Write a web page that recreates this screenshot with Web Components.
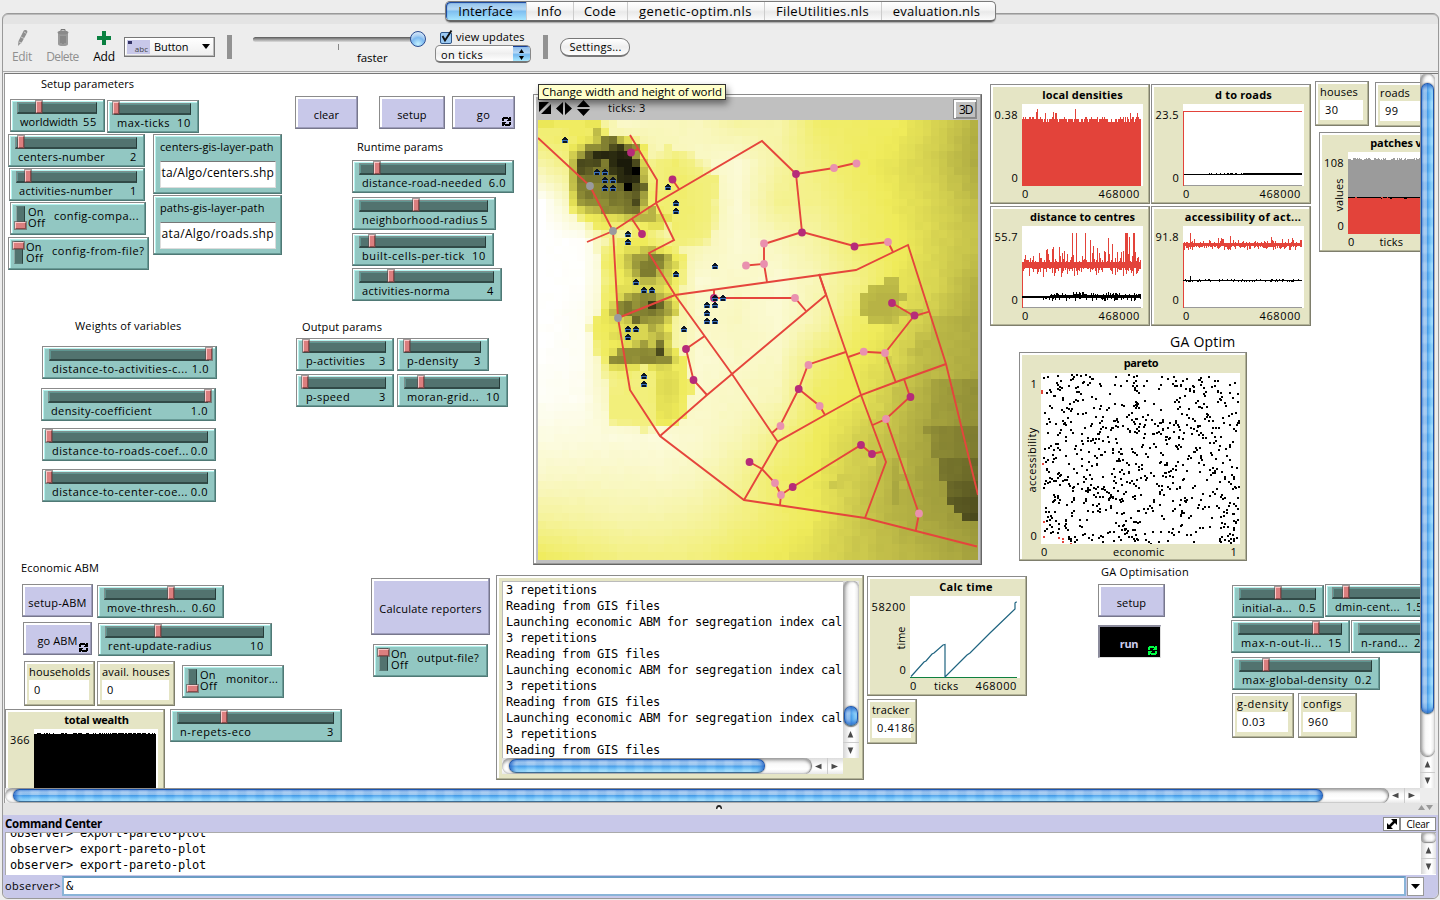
<!DOCTYPE html>
<html lang="en">
<head>
<meta charset="utf-8">
<title>Interface</title>
<style>
html,body{margin:0;padding:0;height:100%;overflow:hidden;background:#ededed}
body{font:11px/14px "Open Sans","Noto Sans",sans-serif;color:#000}
</style>
</head>
<body>
<nl-app></nl-app>
<script>
const define=(tag,css,render,after)=>customElements.define(tag,class extends HTMLElement{
  connectedCallback(){
    if(this.shadowRoot)return;
    const r=this.attachShadow({mode:'open'});
    r.innerHTML=`<style>*,:host{box-sizing:border-box}${css}</style>`+render(k=>this.getAttribute(k)||'',this);
    if(after)after(this,r);
  }
});
const rng=s=>()=>{s|=0;s=s+0x6D2B79F5|0;let t=Math.imul(s^s>>>15,1|s);t=t+Math.imul(t^t>>>7,61|t)^t;return((t^t>>>14)>>>0)/4294967296};
/* Workspace items are placed on the free canvas whose origin is (5,74) */
const at=(x,y,w,h,more='')=>`style="left:${x-5}px;top:${y-74}px;width:${w}px;height:${h}px;${more}"`;
const T=(s,w)=>`<fit-text w="${w}">${s}</fit-text>`;
const bevel=(bg,hi,mid,dark)=>`:host{position:absolute;background:${bg};border:1px solid #8b8b8b;border-right-color:${dark};border-bottom-color:${dark};box-shadow:inset -1px -1px 0 ${mid},inset 1px 1px 0 #fff,inset 2px 2px 0 ${hi}}`;
const TEAL=bevel('#92c7c2','#b5f3ee','#689a96','#4f7975'),TAN=bevel('#e5e5c5','#fff','#b3b397','#7e7e6c'),LILAC=bevel('#c8c8e9','#fff','#9c9cba','#77778c');
const THUMB='background:#db7f7f;border:1px solid #fbc9c9;border-right-color:#8e4b4b;border-bottom-color:#8e4b4b;box-shadow:0 0 0 1px rgba(90,70,70,.55)';
const FOREVER=c=>`<svg width="9" height="9" viewBox="0 0 9 9" shape-rendering="crispEdges"><path d="M1 0H6V1H7V0H9V4H5V3H6V2H2V4H0V1H1zM8 9H3V8H2V9H0V5H4V6H3V7H7V5H9V8H8z" fill="${c}"/></svg>`;

/* Text spaced to a given advance width */
const measure=document.createElement('canvas').getContext('2d');
define('fit-text',':host{display:inline-block;white-space:pre;flex:none}',()=>'<slot></slot>',el=>{
  const w=+el.getAttribute('w'),s=el.textContent.replace(/&amp;/g,'&'),c=getComputedStyle(el);
  measure.font=`${c.fontStyle} ${c.fontWeight} ${c.fontSize} ${c.fontFamily}`;
  if(w)el.style.letterSpacing=((w-measure.measureText(s).width)/s.length).toFixed(3)+'px';
});

define('nl-slider',TEAL+`:host{padding:2px 7px 0 6px}
.g{position:relative;height:12px;background:#52736f;border:1px solid #7f8f8d;border-right:1px solid #263b39;border-bottom:2px solid #314a47;box-shadow:inset 1px 1px 0 #5f9590}
.t{position:absolute;top:-2px;width:6px;height:12px;${THUMB}}
.r{display:flex;justify-content:space-between;margin:1px 0 0 3px;white-space:nowrap}
.v{flex:none}`,g=>`<div class="g"><div class="t" style="left:${+g('t')-7}px"></div></div><div class="r">${T(g('name'),g('nw'))}<span class="v">${T(g('value'),g('value').length*7-(g('value').includes('.')?3.8:0))}</span></div>`);

define('nl-switch',TEAL+`:host{display:flex}
.l{position:relative;width:9px;height:23px;margin:3px 0 0 5px;background:#52736f;border:1px solid #5b7c78;border-left-color:#8da6a3;border-right-color:#2c4340}
.t{position:absolute;left:-2px;width:11px;height:7px;${THUMB}}
.o{line-height:11px;margin:3px 0 0 3px;width:26px}
.n{margin-top:6px}.o fit-text{display:block}`,g=>`<div class="l"><div class="t" style="top:${g('on')?0:15}px"></div></div><div class="o">${T('On',15.5)}${T('Off',17.5)}</div><div class="n">${T(g('name'),g('nw'))}</div>`);

define('nl-button',LILAC+`:host{display:flex;align-items:center;justify-content:center;padding-top:4px}
:host([pressed]){background:#000;color:#cfcff0;font-weight:700;border:2px solid #8b8b9c;border-right:1px solid #ddd;border-bottom:1px solid #ddd;box-shadow:none;padding:3px 2px 0 0}
i{position:absolute;right:3px;bottom:2px;line-height:0}`,g=>T(g('name'),g('nw'))+(g('forever')?`<i>${FOREVER(g('pressed')?'#0f4':'#000')}</i>`:''));

define('nl-monitor',TAN+`:host{padding:3px 5px 0 4px}
.v{height:20px;background:#fff;margin:1px 0 0;padding:3px 0 0 5px;white-space:nowrap}`,g=>`${T(g('name'),g('nw'))}<div class="v">${T(g('value'),g('vw'))}</div>`);

define('nl-input',TEAL+`:host{padding:5px 5px 0 6px}
.f{margin-top:7px;height:27px;background:#fff;border:1px solid #ddd;border-top-color:#777;display:flex;justify-content:flex-end;padding:4px 1px;overflow:hidden;font-size:12px;line-height:14px}`,g=>`${T(g('name'),g('nw'))}<div class="f">${T(g('value'),112.500)}</div>`);

define('nl-note',':host{position:absolute;white-space:nowrap}',g=>T(g('text'),g('nw')));

/* ---- plots ---- */
const svg=(w,h,s)=>`<svg width="${w}" height="${h}" viewBox="0 0 ${w} ${h}" shape-rendering="crispEdges">${s}</svg>`;
const bars=(seed,n,lo,hi,bot,step=1)=>{const r=rng(seed);let d='';for(let x=0;x<n;x+=step){const a=Math.round(lo(r,x)),b=Math.round(hi(r,x));d+=`M${x+.5} ${a}V${bot===undefined?b:bot}`}return d};
const P=(d,c,w=1)=>`<path d="${d}" stroke="${c}" stroke-width="${w}" fill="none"/>`;
const SPIKE={50:7,54:7,63:7,68:14,71:20,86:12,90:18,103:7,104:7,105:7,107:11,111:7,112:7,37:21,24:24,45:28,31:21,75:22};
const RED='#e3433a';
const PLOT={
 density(){return svg(121,82,P(bars(3,119,r=>{const q=r();return q<.03?9:q<.3?13:q<.8?15:18},()=>0,82)+'M15 5V40M14.500 8V30M31.500 8V40M53.500 5V40',RED))},
 roads(){const r=rng(5);let d='';for(let x=24;x<119;x++)if(r()<.3)d+=`M${x+.5} 69V70`;return svg(121,82,P('M0 81.500H119','#999')+P('M.5 82V7.500H119',RED)+P('M1 70.500H119'+d,'#000')+P('M60 69.500H119','#000'))},
 centres(){return svg(121,82,P('M0 81.500H119','#999')+P('M.5 82V39',RED)+P(bars(8,119,(r,x)=>SPIKE[x]||36-Math.pow(r(),3)*13,r=>42+Math.pow(r(),3)*9),RED)+P(bars(9,119,(r,x)=>x<28?70:69.500-Math.pow(r(),3)*(x>100?5:4),(r,x)=>x<20?72:71.500+Math.pow(r(),4)*4),'#000'))},
 access(){return svg(121,82,P('M0 81.500H119','#999')+P('M.5 82V19',RED)+P(bars(12,119,(r,x)=>x==7?7:x==47?10:x==88?11:17-Math.pow(r(),4)*6,r=>20+Math.pow(r(),1.6)*4),RED)+P('M1 54.500H119'+bars(14,119,(r,x)=>x==7?50:54-(r()<.2?1:0),(r,x)=>55+(r()<.25?1:0)),'#000'))},
 patches(){return svg(76,82,P(bars(20,76,r=>r()<.3?6:r()<.5?7:8,()=>0,46),'#9b9b9b')+`<rect y="46" width="76" height="36" fill="${RED}"/>`+P('M0 45.500H76','#000')+P('M5 45.500h1M33 46.500h1M42 46.500h2M56 46.500h3','#000')+P('M7 45.500h2M33 45.500h2M39 45.500h1',RED))},
 wealth(){return svg(124,59,`<rect y="5" width="122" height="54"/>`+P(bars(31,122,r=>r()<.6?4:5,()=>5),'#000'))},
 calc(){return svg(110,82,P('M0 81.500H107','#0f8040')+`<path shape-rendering="auto" d="M1 80.500L14 66 16 65 22 58 24 57 33 49 35 48.500V81L55 61 57 59 60 57 80 37 105 13V7Q105.500 6 107 6" fill="none" stroke="#1f6480" stroke-width="1.200"/>`)},
 pareto(){const r=rng(77);let d='',e='';for(let i=0;i<700;i++){const x=2+Math.floor(r()*196),y=Math.floor(r()*169);if(x<24&&y>160)continue;d+=`M${x} ${y}h2v2h-2z`;if(r()<.16)d+=`M${Math.min(197,x+2)} ${y+(r()<.5?2:-2)}h2v2h-2z`}
  for(const[x,y]of[[0,17],[0,19],[1,90],[2,148],[2,163],[17,164],[21,165],[21,168],[29,170]])e+=`M${x} ${y}h2v2h-2z`;return svg(199,171,`<path d="${d}"/><path d="${e}" fill="${RED}"/>`)}
};
define('nl-plot',TAN+`:host{font-size:11px}
.p{position:absolute;background:#fff;line-height:0;overflow:hidden}
span{position:absolute;white-space:nowrap;line-height:14px}b{font-weight:700}
.r{transform:translate(-100%,-50%)}.c{transform:translate(-50%,-50%)}.l{transform:translate(0,-50%)}.v{transform:translate(-50%,-50%) rotate(-90deg)}`,(g,el)=>{
  const[px,py,pw,ph]=g('area').split(',').map(Number),[ymax,yw,xmax,xw]=g('range').split(',');
  const[tx,tw]=g('tpos').split(',');
  let s=`<span class="c" style="left:${tx}px;top:${g('ty')||10}px"><b>${T(g('name'),tw)}</b></span><div class="p" style="left:${px}px;top:${py}px;width:${pw}px;height:${ph}px">${PLOT[g('kind')]()}</div>`;
  s+=`<span class="r" style="left:${px-4}px;top:${py+10.500}px">${T(ymax,yw)}</span>`;
  if(!g('cut'))s+=`<span class="r" style="left:${px-4}px;top:${py+ph-8.500}px">${T('0',6.500)}</span><span class="l" style="left:${px}px;top:${py+ph+8}px">${T('0',6.500)}</span>`;
  if(xmax)s+=`<span class="r" style="left:${px+pw-3}px;top:${py+ph+8}px">${T(xmax,xw)}</span>`;
  if(g('xl')){const[a,w,x]=g('xl').split(',');s+=`<span class="l" style="left:${x}px;top:${py+ph+8}px">${T(a,w)}</span>`}
  if(g('yl')){const[a,w,x,y]=g('yl').split(',');s+=`<span class="v" style="left:${x}px;top:${y}px">${T(a,w)}</span>`}
  return s;
});

/* ---- scroll bars ---- */
define('nl-scroll',`:host{display:flex;background:linear-gradient(#dcdcdc,#fafafa 40%,#fff 70%,#e8e8e8);overflow:hidden}
:host([v]){flex-direction:column;background:linear-gradient(90deg,#d4d4d4,#fafafa 40%,#fff 70%,#e4e4e4)}
.k{flex:1;position:relative;border-radius:8px;display:flex;box-shadow:inset 0 2px 3px #999,inset 0 -1px 1px #ccc,1px 0 1px #777}
:host([v]) .k{flex-direction:column;box-shadow:inset 2px 0 3px #999,inset -1px 0 1px #ccc,0 1px 1px #888,0 -1px 1px #999}
.t{flex:none;border-radius:8px;margin:1px 0;border:1px solid #1b55ae;border-bottom-color:#3c6c93;background:repeating-linear-gradient(90deg,#ffffff18 0 6px,#2a7fd618 9px 15px,#ffffff18 18px),linear-gradient(#6fa2df,#a5caf0 18%,#94c4f1 42%,#499fe9 50%,#67b9f6 65%,#a9e8ff 95%);box-shadow:inset 5px 0 4px -3px #2a6ccc,inset -5px 0 4px -3px #2a6ccc,0 0 2px #555}
:host([v]) .t{margin:0 1px;background:repeating-linear-gradient(#ffffff18 0 6px,#2a7fd618 9px 15px,#ffffff18 18px),linear-gradient(90deg,#6fa2df,#a5caf0 18%,#94c4f1 42%,#499fe9 50%,#67b9f6 65%,#a9e8ff 95%);box-shadow:inset 0 5px 4px -3px #2a6ccc,inset 0 -5px 4px -3px #2a6ccc,0 0 2px #555}
.a{flex:none;width:16px;height:100%;display:flex;align-items:center;justify-content:center;border-left:1px solid #ccc;padding-right:2px}
:host([v]) .a{width:100%;height:16px;border:0;border-top:1px solid #ccc;padding:0 1px 1px 0}.a:nth-of-type(2){border-color:transparent!important}`,g=>{
  const v=g('v'),[s,l]=(g('thumb')||'0,0').split(',');
  const arrow=d=>`<div class="a"><svg width="7" height="7" viewBox="0 0 7 7"><path d="${d}" fill="#4a4a4a"/></svg></div>`;
  return `<div class="k">${+l?`<div class="t" style="${v?`height:${l}px;margin-top:${s}px`:`width:${l}px;margin-left:${s}px`}"></div>`:''}</div>`+(v?arrow('M3.500 0L6.300 6.500H.7z')+arrow('M3.500 7L.7.500H6.300z'):arrow('M0 3.500L6.500 .7V6.300z')+arrow('M7 3.500L.5 .7V6.300z'));
});

define('nl-output',TAN+`:host{padding:5px 4px 5px 5px;display:grid;grid-template:1fr 16px / 1fr 16px;font:12px/16px "DejaVu Sans Mono","Liberation Mono",monospace}
.x{background:#fff;border:1px solid #bbb;border-right:0;border-bottom:0;padding:0 0 0 3px;overflow:hidden;white-space:pre}.x fit-text{display:block}`,()=>{
  const a='3 repetitions',b='Reading from GIS files',c='Launching economic ABM for segregation index cal';
  return `<div class="x">${[a,b,c,a,b,c,a,b,c,a,b].map(s=>T(s,s.length*7)).join('')}</div><nl-scroll v="1" thumb="125,20"></nl-scroll><nl-scroll thumb="7,256"></nl-scroll>`;
});

/* ---- world view ---- */
const FIELD=[
[54,56,85,82,82,75,77,60,58,56,50,42],
[75,62,60,80,84,88,75,65,57,53,48,40],
[100,75,60,76,76,88,70,68,60,54,50,44],
[100,99,78,74,80,88,82,75,62,56,50,46],
[100,99,78,64,88,85,88,80,68,54,50,42],
[100,97,70,66,85,83,88,78,60,52,47,40],
[99,97,68,70,88,85,84,64,55,50,42,36],
[97,96,78,76,86,84,80,58,54,46,39,36],
[92,91,90,90,86,80,68,56,49,44,37,34],
[85,84,84,85,82,72,60,54,48,42,37,33],
[73,75,78,77,74,67,60,54,47,42,38,35],
[57,62,66,67,65,58,55,51,47,44,41,38]];
const ROWS=[ /* row, first column, lightness of each cell */
[0,0,54,54,57,57,57,57,54,54],[1,0,62,62,62,60,57,57,58,44,60,80],
[2,3,60,60,55,53,46,44,27,44,52,70],[2,8,30],[3,4,54,49,33,33,30,18,13,28,33,56],
[4,4,48,36,20,10,9,10,8,9,37,60],[5,4,44,17,18,17,29,10,6,6,17,50],
[6,4,44,19,22,28,28,13,10,6,0,45],[7,4,44,28,27,27,28,27,10,9,10,42,60],
[8,4,45,30,30,31,30,30,25,0,18,24,58],[9,4,50,32,28,31,30,27,28,25,22,37,56],
[10,4,52,36,33,33,33,28,29,27,17,40,57],[11,4,60,50,44,42,32,33,32,28,27,47,42,55],
[12,5,66,55,54,52,52,50,46,43,42,42,49,53],[13,6,78,58,56,62,62,66,62,57,53,53,66],
[14,6,86,80,70,70,74,72,60,57,60,66],[15,7,84,78,66,58,57,55,55,56,60,64],
[16,7,84,66,60,57,52,52,46,44,53,57,62],[17,8,62,57,53,45,37,37,30,30,41,55,60],
[18,8,60,56,53,46,36,30,29,32,44,50,62],[19,8,64,58,55,50,40,29,29,42,47,56,66],
[20,8,66,60,56,53,48,43,43,48,49,58,66],[21,8,62,56,52,52,50,50,50,50,54,60],
[22,8,60,57,50,40,35,32,33,42,48,56],[23,8,60,50,32,28,34,31,14,24,40,52],
[24,8,54,44,32,28,31,30,28,32,38,48],[25,7,58,54,52,50,46,25,34,36,37,48],
[26,6,80,57,55,54,53,51,50,50,40,46,54],[27,7,58,56,52,51,50,50,50,46,42,48],
[28,7,64,58,55,54,52,46,37,46,28,50],[29,7,66,57,52,36,33,33,32,33,17,46,54],
[30,8,60,33,32,33,34,31,31,33,33,50,56],[31,8,62,52,51,53,53,60,53,50,51,56,56],
[32,8,66,58,55,54,57,57,56,53,52,53,56],[33,9,60,58,57,58,58,57,52,51,52,56,60],
[34,9,58,58,56,57,57,56,52,51,52,56,60],[35,9,57,57,57,57,57,56,53,52,53,57],
[36,9,57,57,57,57,58,57,53,53,54,58],[37,9,57,57,57,57,57,57,54,53,54,58],
[38,9,64,60,60,58,58,58,56,55,62],[39,13,66,76],
[3,16,66,78],[4,15,70,66,62,64,70],[5,14,64,60,59,56,60,62,70,76],[6,14,62,60,58,57,58,60,62,70],
[7,15,60,58,56,56,58,60,60,60],[8,15,60,57,56,56,58,59,60,62],[9,15,58,57,57,56,58,59,60,62],
[10,15,58,57,56,57,58,59,60,68],[11,16,57,56,57,57,59,60,66],[12,17,57,57,58,59,60,68],
[13,17,56,57,58,60,61,70],[14,17,58,59,59,60,62],[15,17,60,60,62,64,70],
[20,44,44,44],[21,42,44,43,43,43],[22,41,44,43,42,42,42,44],[23,41,44,42,42,42,43],
[24,41,43,42,42,42,43,44,46,45],[25,42,44,44,43,45],
[28,48,44,43],[27,48,45,45],[29,47,45,43,44],[34,45,45,45],[39,49,34],
[42,45,44],[45,45,40],[46,45,39,43],[47,45,39],[48,45,39],[43,45,41,44],[44,45,40,44],
[45,38,48,48],[46,37,47,48],[43,40,48,48,49],[36,42,50,50],[30,44,48]];
const RECTS=[[25,50,8,6,42],[33,50,6,6,36],[39,50,4,6,31],[43,51,3,5,27],[46,52,2,4,24],[48,52,1,4,21],[49,53,1,3,21],[50,54,1,2,19]];
const paint=cv=>{
  const c=cv.getContext('2d'),N=56,r=rng(42),L=[];
  for(let j=0;j<N;j++){L[j]=[];for(let i=0;i<N;i++){
    const u=i/5,v=j/5,a=Math.min(10,u|0),b=Math.min(10,v|0),p=u-a,q=v-b;
    L[j][i]=(FIELD[b][a]*(1-p)+FIELD[b][a+1]*p)*(1-q)+(FIELD[b+1][a]*(1-p)+FIELD[b+1][a+1]*p)*q+(r()-.5)*1.4;
  }}
  for(const[j,i,h,w,l]of RECTS)for(let y=j;y<j+h;y++)for(let x=i;x<i+w;x++)L[y][x]=l+(r()-.5)*1.5-(x-52)*.7;
  for(const[j,i,...a]of ROWS)a.forEach((l,k)=>{
    const x=i+k;
    if(j>=31&&j<=40&&x<15&&l>=54)l+=7;
    if(j>=3&&j<=15&&x>=14&&x<26&&l>=55)l+=4;
    L[j][x]=l;
  });
  for(let j=0;j<N;j++)for(let i=0;i<N;i++){
    const l=Math.max(0,Math.min(100,L[j][i])),m=l<55?[239*l/55,235*l/55,90*l/55]:[239+16*(l-55)/45,235+20*(l-55)/45,90+165*(l-55)/45];
    c.fillStyle=`rgb(${m.map(Math.round)})`;
    const x=Math.round(i*440/N),y=Math.round(j*440/N);c.fillRect(x,y,8,8);
  }
};
const ROADS=['538,138 590,186 613,231 618,318 630,390 660,436 744,500 865,518 977,546.500','587,242 613,231 656,203 762,141 796,174 802,232 854,246 888,242 893,252','630,135 657,180 656,203 674,240 649,253 675,295 732,374 777.700,441.700 744,500','796,174 834,168 856,163','802,232 764,244 764,264 746,265.500','764,264 767,282','618,318 675,295 856,270 908,245 946,364 978,495','819,274 826,295','819,274 861,395 886,462 865,518','826,295 732,374 707,395 660,436','714,289 714,298 795,298 806,311','777.700,441.700 825,415 861,395 896,382 946,364','704.700,336 686,349 693.500,380 707,395','848.300,357 863.700,351.700 885,353 895.700,382','885,353 914,316 929.300,311.700','892,303 914,316','845.700,352 808,364.700 798.700,389 780,426 772,433','798.700,389 819.700,406 825,415','904,379 910,396.700 886,419 872.700,425','886,419 919,513.700 915.700,530.700','749.500,462 762,469 775,483 781,494.700 780,505','781,494.700 792.700,487 861,445 872,454 882,451.700','631,152.500 638,149','672,179 679,189','632,219 642,234'];
const DOTS={'#9a9a9e':'590,186 613,231 618,318','#b62b79':'631,152.500 672.500,179.500 642,234 714,298 686,349 693.500,380 749.500,462 796,174 802,232.500 854.500,246.500 892,303 914.500,315.500 798.700,389 910.500,397 861,445 872,454 792.700,487','#e991af':'834,168 856.500,163.500 888,242 764,243.500 764,264 746,265.500 795,298 863.700,351.700 885,353 808.500,365 819.700,406 780.500,426 886,419 775,483 781,495 919,513.500'};
const HOUSES='565,140 597,172 605,172 605,180 613,180 605,187.500 613,187.500 668,187 675.500,203 675.500,211 628,234 628,242 715,266 675.500,274 636,282 644,290 652,290 715,298 722.700,298 707,305 715,305 707,313 707,321 715,321 683.500,329 628,329 636,329 628,337 644,376 644,384';
define('nl-view',bevel('#c0c0c0','#fff','#999','#666')+`:host{padding:3px 4px 4px 4px;display:flex;flex-direction:column}
header{flex:none;height:22px;display:flex;align-items:center;padding:0 0 2px 1px}
header svg{flex:none;margin-right:5px}.tk{margin-left:13px}
.d{margin-left:auto;width:24px;height:20px;margin-top:2px;padding:2px 5px;background:#c0c0c0;border:1px solid #8b8b8b;box-shadow:inset 2px 2px 0 #fff,inset -1px -1px 0 #888;font-size:12px;line-height:16px}
.w{position:relative;width:440px;height:440px;overflow:hidden}canvas{display:block}.w svg{position:absolute;inset:0}`,()=>{
  const pairs=s=>s.split(' ').map(p=>p.split(','));
  return `<header><svg width="12" height="12" viewBox="0 0 12 12"><path d="M0 0H10L0 10zM12 2V12H2z"/></svg><svg width="16" height="13" viewBox="0 0 16 13"><path d="M7 0V13L0 6.500zM9 0V13L16 6.500z"/></svg><svg width="13" height="16" viewBox="0 0 13 16"><path d="M0 7H13L6.500 0zM0 9H13L6.500 16z"/></svg><span class="tk">${T('ticks: 3',37.500)}</span><span class="d">${T('3D',13.500)}</span></header>
  <div class="w"><canvas width="440" height="440"></canvas><svg width="440" height="440" viewBox="538 120 440 440"><g fill="none" stroke="#e5453c" stroke-width="1.900">${ROADS.map(p=>`<polyline points="${p}"/>`).join('')}</g>${Object.entries(DOTS).map(([c,s])=>pairs(s).map(([x,y])=>`<circle cx="${x}" cy="${y}" r="3.900" fill="${c}"/>`).join('')).join('')}${pairs(HOUSES).map(([x,y])=>`<g shape-rendering="crispEdges" transform="translate(${Math.round(x-3)} ${Math.round(y-3)})"><path d="M1 1H5V2H6V6H0V3H1z" fill="#3a70bb"/><path d="M2 0H4V1H5V2H6V3H0V2H1V1H2zM1 4H5V6H1z" fill="#0b1422"/></g>`).join('')}</svg></div>`;
},(el,r)=>paint(r.querySelector('canvas')));
define('nl-tooltip',`:host{position:absolute;background:#ffffcb;border:1px solid #333;padding:0 0 0 3px;box-shadow:2px 4px 7px #0007;white-space:nowrap;font-size:11.500px;line-height:14px}`,()=>T('Change width and height of world',180));

/* ---- chrome ---- */
define('nl-tabs',`:host{display:flex;width:551px;height:21px;border:1px solid #7b7b7b;border-bottom:2px solid #666;border-radius:5px;overflow:hidden;background:linear-gradient(#fff,#f3f3f3 45%,#e9e9e9 55%,#fbfbfb);font-size:13px;line-height:18px;box-shadow:0 1px 1px #aaa}
div{flex:none;display:flex;justify-content:center;border-left:1px solid #ccc}
div:first-of-type{border:0;border-radius:4px 0 0 4px;background:linear-gradient(#8fc0ea,#b6d9f5 40%,#7fbff0 52%,#a5e5ff);box-shadow:inset 1px 1px 1px #15409a}`,()=>[['Interface',54.500,80],['Info',25,47],['Code',32,54],['genetic-optim.nls',113,137],['FileUtilities.nls',93,117],['evaluation.nls',87.500,111]].map(([s,w,b])=>`<div style="width:${b}px">${T(s,w)}</div>`).join(''));

define('nl-toolbar',`:host{display:flex;height:48px;padding-left:8px;align-items:flex-start;background:#ededed}
.b{flex:none;display:flex;flex-direction:column;align-items:center;width:42px;color:#8f8f8f;font-size:12px}
.b svg{height:20px;margin:4px 0 2px}.b.k{color:#000}
.cb{display:flex;align-items:center;width:91px;height:20px;margin:13px 0 0 2px;border:1px solid #777;background:linear-gradient(#fff,#eee);box-shadow:inset -1px -1px #bbb,inset 1px 1px #fff;padding:0 4px 1px 2px}
.cb em{width:23px;height:14px;background:#c8c8e9;font:8px/17px "Open Sans",sans-serif;text-align:right;padding-right:2px;margin-right:4px;position:relative;color:#444}
.cb em::before{content:"";position:absolute;left:1px;top:1px;width:4px;height:3px;background:#336}
.cb svg{margin-left:auto}
.s{width:5px;height:24px;background:#929292;margin:11px 0 0 12px}
.sl{position:relative;width:174px;height:48px;margin-left:21px}
.sl .tr{position:absolute;left:0;top:13px;width:166px;height:5px;border-radius:3px;background:linear-gradient(#777,#b5b5b5 60%,#ddd);border-top:1px solid #666}
.sl .kn{position:absolute;left:157px;top:7px;width:16px;height:16px;border-radius:50%;background:radial-gradient(circle at 50% 85%,#c4f2ff,#7db9f0 45%,#a9cff3 60%,#dcebfa 90%);border:1px solid #2a4c91}
.sl .tk{position:absolute;left:85px;top:20px;width:1px;height:6px;background:#888}
.sl span{position:absolute;left:104px;top:27px;font-size:11.500px}
.u{width:96px;margin:5px 0 0 8px}
.u>div:first-of-type{display:flex;align-items:center;gap:3px;padding-left:5px;height:15px}
.pop{display:flex;height:18px;border:1px solid #888;border-bottom:2px solid #777;border-radius:5px;background:linear-gradient(#fff,#eee 50%,#fff);padding-left:5px;overflow:hidden;line-height:17px;margin-top:1px}
.pop i{margin-left:auto;width:17px;background:linear-gradient(#8dbcec,#b3d7f6 40%,#74b9f0 55%,#a9e9ff);display:flex;align-items:center;justify-content:center;border-top:1px solid #15409a}
.set{margin:14px 0 0 12px;width:70px;height:19px;border:1px solid #777;border-bottom:2px solid #777;border-radius:9px;background:linear-gradient(#fff,#eee 50%,#fff);text-align:center;line-height:16px;padding-left:1px}`,()=>`
<div class="b" style="width:22px"><svg width="14" viewBox="0 0 14 20"><path d="M3 18L3.500 13 8.500 3Q9 1.500 11 2T12 5L7 14z" fill="#8f8f8f"/><path d="M4 14L6.500 15M9 4L11.500 5.500M6 9L9 10.500" stroke="#ccc"/></svg>${T('Edit',20)}</div>
<div class="b" style="width:33px;margin-left:13px"><svg width="14" viewBox="0 0 14 20"><path d="M2 4.500H12V16Q12 18 7 18T2 16z" fill="#9a9a9a"/><ellipse cx="7" cy="4.500" rx="5.500" ry="2" fill="#8a8a8a"/><path d="M5 3V1.500H9V3M5 8V15M7 8V16M9 8V15" fill="none" stroke="#777"/></svg>${T('Delete',32.500)}</div>
<div class="b k" style="width:22px;margin-left:14px"><svg width="14" viewBox="0 0 14 20"><path d="M5 3H9V8H14V12H9V17H5V12H0V8H5z" fill="#0a8040"/></svg>${T('Add',21.500)}</div>
<div class="cb" style="margin-left:9px"><em>abc</em>${T('Button',34.500)}<svg width="8" height="5" viewBox="0 0 8 5"><path d="M0 0H8L4 5z"/></svg></div><div class="s"></div>
<div class="sl"><div class="tr"></div><div class="tk"></div><div class="kn"></div><span>${T('faster',30.500)}</span></div>
<div class="u"><div><svg width="13" height="14" viewBox="0 0 13 14"><rect x=".5" y="2.500" width="11" height="11" rx="1.500" fill="#9bc9f2" stroke="#2f5587"/><path d="M2.500 6L5 10.500L11.500 .5" fill="none" stroke="#111" stroke-width="1.900"/></svg>${T('view updates',68.500)}</div><div class="pop">${T('on ticks',42)}<i><svg width="5" height="11" viewBox="0 0 5 11"><path d="M0 4H5L2.500 0zM0 7H5L2.500 11z"/></svg></i></div></div>
<div class="s" style="margin-left:12px"></div><div class="set">${T('Settings...',52)}</div>`);

define('nl-canvas',`:host{display:block;position:relative;overflow:hidden;background:#fff}`,()=>{
 const sl=(x,y,w,n,nw,v,t)=>`<nl-slider ${at(x,y,w,33)} name="${n}" nw="${nw}" value="${v}" t="${t-x}"></nl-slider>`;
 const sw=(x,y,w,n,nw,on)=>`<nl-switch ${at(x,y,w,33)} name="${n}" nw="${nw}" on="${on}"></nl-switch>`;
 const bt=(x,y,w,h,n,nw,f='')=>`<nl-button ${at(x,y,w,h)} name="${n}" nw="${nw}" ${f}></nl-button>`;
 const mo=(x,y,w,n,nw,v,vw)=>`<nl-monitor ${at(x,y,w,45)} name="${n}" nw="${nw}" value="${v}" vw="${vw}"></nl-monitor>`;
 const no=(x,y,t,nw,fs=11)=>`<nl-note style="left:${x-5}px;top:${y-81}px;font-size:${fs}px" text="${t}" nw="${nw}"></nl-note>`;
 const pl=(x,y,w,h,k,n,tp,area,range,more='')=>`<nl-plot ${at(x,y,w,h)} kind="${k}" name="${n}" tpos="${tp}" area="${area}" range="${range}" ${more}></nl-plot>`;
 return [
 no(41,84,'Setup parameters',93),no(357,147,'Runtime params',86),no(75,326,'Weights of variables',106.500),no(302,327,'Output params',80),no(21,568,'Economic ABM',78),no(1170,342,'GA Optim',65.500,14),no(1101,572,'GA Optimisation',88),
 sl(10,99,95,'worldwidth',58,'55',35),sl(107,100,92,'max-ticks',53,'10',111.500),sl(8,134,137,'centers-number',87,'2',17),sl(9,168,136,'activities-number',94,'1',24),
 sw(10,202,136,'config-compa...',85,''),sw(8,237,141,'config-from-file?',92.500,1),
 `<nl-input ${at(153,134,129,60)} name="centers-gis-layer-path" nw="113.500" value="ta/Algo/centers.shp"></nl-input><nl-input ${at(153,195,129,60)} name="paths-gis-layer-path" nw="104.500" value="ata/Algo/roads.shp"></nl-input>`,
 bt(295,96,63,33,'clear',25.500),bt(379,96,66,33,'setup',29.500),bt(452,96,63,33,'go',13.500,'forever="1"'),
 sl(352,160,162,'distance-road-needed',120,'6.0',373),sl(352,197,144,'neighborhood-radius',116.500,'5',412),sl(352,233,142,'built-cells-per-tick',103,'10',368),sl(352,268,150,'activities-norma',88,'4',387),
 sl(42,346,175,'distance-to-activities-c...',136,'1.0',205),sl(41,388,175,'density-coefficient',101,'1.0',204),sl(42,428,174,'distance-to-roads-coef...',137,'0.0',45),sl(42,469,174,'distance-to-center-coe...',136,'0.0',45),
 sl(296,338,98,'p-activities',59,'3',302),sl(397,338,92,'p-density',51.500,'3',403),sl(296,374,98,'p-speed',44,'3',301),sl(397,374,111,'moran-grid...',72,'10',417),
 bt(22,584,71,33,'setup-ABM',58.500),bt(23,622,69,33,'go ABM',40,'forever="1"'),sl(97,585,127,'move-thresh...',79,'0.60',167),sl(98,623,174,'rent-update-radius',104,'10',154),
 mo(24,661,71,'households',61.500,'0',6.500),mo(97,661,78,'avail. houses',68,'0',6.500),sw(182,665,102,'monitor...',52,''),sl(170,709,172,'n-repets-eco',71.500,'3',220),
 bt(371,578,119,57,'Calculate reporters',102.500),sw(373,644,115,'output-file?',62,1),
 pl(5,709,160,120,'wealth','total wealth','90.500,64.500','28,19,124,59','366,20','cut="1"'),
 `<nl-output ${at(496,575,368,205)}></nl-output><nl-view ${at(533,94,449,471)}></nl-view><nl-tooltip ${at(538,84,188,16)}></nl-tooltip>`,
 pl(990,84,160,120,'density','local densities','91.500,80.500','31,19,121,82','0.38,23.500,468000,41.500'),
 pl(1151,84,160,120,'roads','d to roads','91.500,57','31,19,121,82','23.5,23.500,468000,41.500'),
 pl(990,206,160,120,'centres','distance to centres','91.500,105','31,19,121,82','55.7,23.500,468000,41.500'),
 pl(1151,206,160,120,'access','accessibility of act...','91,116.500','31,19,121,82','91.8,23.500,468000,41.500'),
 mo(1315,81,54,'houses',38,'30',13.500),mo(1375,82,54,'roads',30,'99',13.500),
 pl(1319,132,160,120,'patches','patches v','76,51.500','28,19,124,82','108,20','xl="ticks,23.500,59.500" yl="values,33,18.500,61.500"'),
 pl(1019,352,228,209,'pareto','pareto','121,34.500','21,20,199,171','1,6.500,1,6.500','xl="economic,51.500,93" yl="accessibility,65,12,106.500"'),
 pl(867,576,160,120,'calc','Calc time','98,53.500','42,19,110,82','58200,34.500,468000,41.500','xl="ticks,24.500,66" yl="time,23,33,61"'),
 mo(867,699,50,'tracker',37.500,'0.4186',38),
 bt(1098,584,67,33,'setup',29.500),bt(1098,625,63,33,'run',18.500,'pressed="1" forever="1"'),
 sl(1232,585,92,'initial-a...',50,'0.5',1274),sl(1325,584,106,'dmin-cent...',65,'1.5',1342),sl(1231,620,119,'max-n-out-li...',81,'15',1312),sl(1351,620,78,'n-rand...',47,'2',1460),sl(1232,657,148,'max-global-density',106,'0.2',1262),
 mo(1232,693,62,'g-density',51.500,'0.03',23.500),mo(1298,693,59,'configs',39,'960',20.500)].join('')
});

define('nl-workspace',`:host{flex:none;display:grid;grid-template:714px 15px / 1415px 15px;height:730px;margin-left:1px;border-top:1px solid #777;border-left:1px solid #999}`,()=>`<nl-canvas></nl-canvas><nl-scroll v="1" thumb="9,631"></nl-scroll><nl-scroll thumb="8,1310"></nl-scroll>`);

define('nl-command',`:host{flex:1;display:flex;flex-direction:column;background:#c8c8e9;padding:0 2px 2px 0;margin:0;border-radius:0 0 6px 6px;overflow:hidden}
header{display:flex;height:17px;align-items:center;font-size:11.500px;font-weight:700;padding:1px 0 0 2px;flex:none}
header span{margin-left:auto;display:flex;font-weight:400}
.e,.c{background:#fff;border:1px solid #8b8b8b;height:14px;display:flex;align-items:center;justify-content:center;font-size:10px}.e{width:17px}.c{width:36px}
.o{flex:none;height:43px;display:flex;margin:0 0 0 2px;width:1431px;border-top:1px solid #aaa;border-left:1px solid #aaa;background:#fff;overflow:hidden;font:12px/16px "DejaVu Sans Mono","Liberation Mono",monospace}
.o>div{flex:1;display:flex;flex-direction:column;justify-content:flex-end;padding:0 0 2px 4px;height:42px}
.o nl-scroll{width:15px;height:41px}
.i{display:flex;flex:none;height:22px;align-items:center;padding-left:2px}
.f{flex:none;width:1344px;height:20px;margin-left:1px;background:#fff;border:2px solid #8ab4d8;border-top-color:#6c9cc4;padding-left:2px;font:12px/16px "DejaVu Sans Mono",monospace}
.d{width:17px;height:19px;margin-left:1px;background:#fff;border:1px solid #999;display:flex;align-items:center;justify-content:center}`,()=>`<header>${T('Command Center',97)}<span><div class="e"><svg width="10" height="10" viewBox="0 0 10 10"><path d="M4 0H10V6zM0 4V10H6z"/><path d="M8 2L2 8" stroke="#000" stroke-width="2.500"/></svg></div><div class="c">${T('Clear',23)}</div></span></header>
<div class="o"><div>${[1,2,3].map(()=>T('observer> export-pareto-plot',196)).join('')}</div><nl-scroll v="1"></nl-scroll></div>
<div class="i">${T('observer>',56)}<div class="f">&amp;</div><div class="d"><svg width="9" height="5" viewBox="0 0 9 5"><path d="M0 0H9L4.500 5z"/></svg></div></div>`);

define('nl-app',`:host{display:flex;flex-direction:column;width:1440px;height:900px;padding:13px 1px 1px 2px;background:#ededed;position:relative}
.p{flex:1;display:flex;flex-direction:column;border:1px solid #999;border-radius:6px;box-shadow:inset 0 1px 0 #bbb;background:#e4e4e4;min-height:0}
.tabs{display:flex;justify-content:center;height:9px;margin-top:-13px;padding-right:1px;flex:none}
nl-tabs{flex:none;position:relative}
.g{height:16px;flex:none;margin-top:-2px}
nl-toolbar{flex:none;border-bottom:1px solid #aaa}
.split{height:12px;flex:none;display:flex;justify-content:center;align-items:center;position:relative;background:#e4e4e4;padding:0 3px 3px 0}
.split svg:last-child{position:absolute;right:4px}
.mid{flex:none;display:flex;flex-direction:column;background:#ededed;padding-top:1px}`,()=>`<div class="p"><div class="tabs"><nl-tabs></nl-tabs></div><div class="g"></div><nl-toolbar></nl-toolbar><div class="mid"><nl-workspace></nl-workspace></div><div class="split"><svg width="6" height="5" viewBox="0 0 6 5"><path d="M0 4Q0 0 3 0T6 4" fill="#222"/><circle cx="3" cy="3.500" r="1.500" fill="#fff"/></svg><svg width="16" height="5" viewBox="0 0 16 5"><path d="M0 5H7L3.500 0zM8 0H15L11.500 5z" fill="#999"/></svg></div><nl-command></nl-command></div>`);
</script>
</body>
</html>
